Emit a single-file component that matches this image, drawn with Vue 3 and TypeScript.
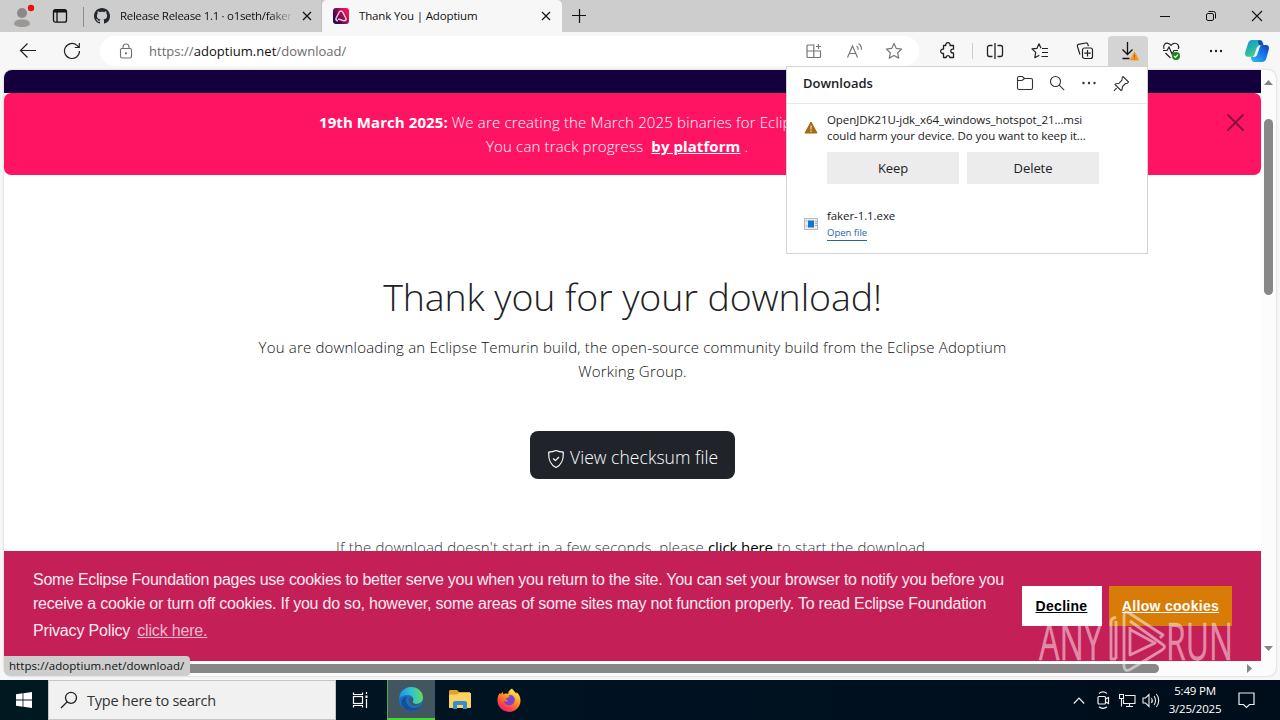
<script setup lang="ts">
interface Download {
  name: string
  detail?: string
  link?: string
}

const flagged: Download = {
  name: 'OpenJDK21U-jdk_x64_windows_hotspot_21...msi',
  detail: 'could harm your device. Do you want to keep it...',
}
const finished: Download = { name: 'faker-1.1.exe', link: 'Open file' }
</script>

<template>
  <div class="screen">
    <header class="tabstrip">
      <div class="profile">
        <svg width="24" height="24" viewBox="0 0 24 24">
          <circle cx="10" cy="9" r="5" fill="#8d8886" />
          <path d="M2 20.500c0-4 3.500-5 8-5s8 1 8 5c-2 2-5 2.500-8 2.500s-6-.5-8-2.500z" fill="#9b9795" />
          <circle cx="19" cy="4" r="3.200" fill="#e3120b" />
        </svg>
      </div>
      <div class="tabmenu">
        <svg width="16" height="16" viewBox="0 0 16 16" fill="none" stroke="#111" stroke-width="1.300">
          <rect x="1.500" y="1.700" width="13" height="12.500" rx="2" />
          <path d="M2 3.300h12" stroke-width="2.400" />
          <path d="M5 4v10" />
        </svg>
      </div>
      <div class="tab idle">
        <svg width="16" height="16" viewBox="0 0 16 16">
          <path fill="#24292f" d="M8 0C3.580 0 0 3.580 0 8c0 3.540 2.290 6.530 5.470 7.590.4.070.55-.17.55-.38 0-.19-.01-.82-.01-1.490-2.010.37-2.530-.49-2.690-.94-.09-.23-.48-.94-.82-1.130-.28-.15-.68-.52-.01-.53.63-.01 1.080.58 1.230.82.72 1.210 1.870.87 2.330.66.070-.52.280-.87.510-1.070-1.780-.2-3.640-.89-3.640-3.950 0-.87.310-1.590.82-2.150-.08-.2-.36-1.020.08-2.120 0 0 .67-.21 2.200.82.640-.18 1.320-.27 2-.27s1.360.09 2 .27c1.530-1.040 2.200-.82 2.200-.82.440 1.100.160 1.920.080 2.120.510.560.820 1.270.820 2.150 0 3.070-1.870 3.750-3.650 3.950.290.250.540.730.540 1.480 0 1.070-.01 1.930-.01 2.200 0 .210.150.460.550.380A8.010 8.010 0 0 0 16 8c0-4.420-3.580-8-8-8z" />
        </svg>
        <span class="tabtitle fade">Release Release 1.1 · o1seth/faker</span>
        <svg class="close" width="10" height="10" viewBox="0 0 10 10"><path d="M1 1l8 8M9 1L1 9" stroke="#111" stroke-width="1.300" /></svg>
      </div>
      <div class="tab active">
        <svg width="16" height="16" viewBox="0 0 16 16">
          <defs><linearGradient id="ado" x1="0" x2="1" y1="0.800" y2="0.200"><stop offset=".15" stop-color="#2b0a4a" /><stop offset=".85" stop-color="#e8125c" /></linearGradient></defs>
          <rect width="16" height="16" rx="3" fill="url(#ado)" />
          <path d="M5 12.800C3 12.800 2.500 11.500 3.200 10L6.300 4c.8-1.500 2.600-1.500 3.400 0L12.800 10c.8 1.600 0 2.800-1.800 2.800-1.800 0-3.200-2.100-6-1.500" fill="none" stroke="#f6c5db" stroke-width="1.500" />
        </svg>
        <span class="tabtitle">Thank You | Adoptium</span>
        <svg class="close" width="10" height="10" viewBox="0 0 10 10"><path d="M1 1l8 8M9 1L1 9" stroke="#111" stroke-width="1.200" /></svg>
      </div>
      <div class="newtab">
        <svg width="14" height="14" viewBox="0 0 14 14"><path d="M7.500 0v14M0 6.500h14" stroke="#111" stroke-width="1.200" /></svg>
      </div>
      <div class="winbtns">
        <span><svg width="12" height="12" viewBox="0 0 12 12"><path d="M1 6.500h10" stroke="#111" /></svg></span>
        <span><svg width="12" height="12" viewBox="0 0 12 12" fill="none" stroke="#111"><rect x="1.500" y="3.500" width="7" height="7" rx="1.500" /><path d="M3.500 1.500h5a2 2 0 0 1 2 2v5" /></svg></span>
        <span><svg width="12" height="12" viewBox="0 0 12 12"><path d="M1 1l10 10M11 1L1 11" stroke="#111" stroke-width="1.100" /></svg></span>
      </div>
    </header>

    <nav class="toolbar">
      <div class="cell back"><svg width="18" height="16" viewBox="0 0 18 16" fill="none" stroke="#222" stroke-width="1.200"><path d="M17 7.500H1.500M8.500 .5L1.500 7.500 8.500 14.500" /></svg></div>
      <div class="cell reload"><svg width="18" height="18" viewBox="0 0 18 18" fill="none" stroke="#222" stroke-width="1.200"><path d="M16.500 9A7.500 7.500 0 1 1 14 3.400L16 5.300M16.300 1v4.500h-4.500" /></svg></div>
      <div class="omnibox">
        <svg class="lock" width="14" height="16" viewBox="0 0 14 16" fill="none" stroke="#6f6f6f" stroke-width="1.100"><rect x="1.500" y="5.500" width="11" height="9.500" rx="1.500" /><path d="M4 5.500V4a3 3 0 0 1 6 0v1.500" /><circle cx="7" cy="10.300" r=".6" fill="#666" /></svg>
        <span class="url">https://<b>adoptium.net</b>/download/</span>
        <span class="cell40"><svg width="16" height="16" viewBox="0 0 16 16" fill="none" stroke="#767676" stroke-width="1.200"><path d="M1 8h13.500v5.500a1 1 0 0 1-1 1H2a1 1 0 0 1-1-1v-10.500a1 1 0 0 1 1-1h5.800v12M12.500 1v5M10 3.500h5" /></svg></span>
        <span class="cell40 read"><svg width="18" height="16" viewBox="0 0 18 16" fill="none" stroke="#767676" stroke-width="1.200"><path d="M1.500 14.500L6.500 3l5 11.500M3.300 10.500h6.400M10.500 3c1.300.8 1.800 2 1.700 3.700M12.500.8c2.200 1.200 3.100 3.200 3 6" /></svg></span>
        <span class="cell40"><svg width="18" height="18" viewBox="0 0 18 18" fill="none" stroke="#767676" stroke-width="1.200" stroke-linejoin="round"><path d="M9 1.500l2.300 4.900 5.300.7-3.900 3.700 1 5.300L9 13.500l-4.700 2.600 1-5.300L1.400 7.100l5.300-.7z" /></svg></span>
      </div>
      <div class="cell ext"><svg width="18" height="18" viewBox="0 0 18 18" fill="none" stroke="#222" stroke-width="1.300" stroke-linejoin="round"><path d="M4.500 3.500h2.300a2.200 2.200 0 1 1 4.200 0h3.500v3.700h-.8a1.900 1.900 0 0 0 0 3.800h.8v4.500h-3.700v-.6a1.900 1.900 0 0 0-3.600 0v.6H4.500V11.400a2.200 2.200 0 1 1 0-4.200z" /></svg></div>
      <i class="rule"></i>
      <div class="cell split"><svg width="18" height="16" viewBox="0 0 18 16" fill="none" stroke="#222" stroke-width="1.300"><path d="M6.500 2.500h-3a2 2 0 0 0-2 2v7a2 2 0 0 0 2 2h3M11.500 2.500h3a2 2 0 0 1 2 2v7a2 2 0 0 1-2 2h-3M9 0v16" /></svg></div>
      <div class="cell fav"><svg width="18" height="18" viewBox="0 0 18 18" fill="none" stroke="#222" stroke-width="1.200" stroke-linejoin="round"><path d="M10 6.300L8 1.800 6 6.300 1 6.900l3.700 3.500-.9 5.300 4.500-2.500M11 6.500h6M11 10.500h6M10.500 14.500h6.500" /></svg></div>
      <div class="cell coll"><svg width="18" height="18" viewBox="0 0 18 18" fill="none" stroke="#222" stroke-width="1.200"><rect x="6.500" y="6" width="10" height="10.500" rx="2" /><path d="M11.500 8v6.500M8.300 11.200h6.500M4 12.500L1.400 4.400c-.3-1 .1-1.700 1-2L9.800 1c1-.2 1.700.3 2 1.200l.6 2" /></svg></div>
      <div class="cell dl">
        <svg width="24" height="22" viewBox="0 0 24 22" fill="none"><path d="M11.500 2v12M6.500 9.500l5 5 5-5M6.500 18.500h7" stroke="#111" stroke-width="1.300" /><path d="M18.500 12l4 8h-8z" fill="#f7981d" stroke="#f7981d" /><path d="M18.500 14.500v3M18.500 18.500v1" stroke="#b35d00" /></svg>
      </div>
      <div class="cell health">
        <svg width="20" height="20" viewBox="0 0 20 20" fill="none" stroke="#222" stroke-width="1.200"><path d="M2 8C.5 4 3.500 1.700 6 2.300c1.600.3 3 2 3 2s1.400-1.700 3.200-2c3-.4 5.500 2.200 4 5.700M1 9.500h4l2-3.500 3 7 2-3.500h4M3.500 12l5 5" /><circle cx="14" cy="15" r="4" fill="#16871c" stroke="none" /><path d="M12 15l1.500 1.500 2.500-2.800" stroke="#fff" /></svg>
      </div>
      <div class="cell more"><svg width="16" height="4" viewBox="0 0 16 4" fill="#222"><circle cx="3" cy="2" r="1.200" /><circle cx="8" cy="2" r="1.200" /><circle cx="13" cy="2" r="1.200" /></svg></div>
      <div class="cell copilot">
        <svg width="26" height="24" viewBox="0 0 26 24">
          <defs>
            <linearGradient id="c1" x1="0" y1="0" x2=".6" y2="1"><stop stop-color="#1597d5" /><stop offset=".5" stop-color="#23b3ad" /><stop offset="1" stop-color="#54d179" /></linearGradient>
            <linearGradient id="c2" x1="1" y1="0" x2="0" y2="1"><stop stop-color="#123fb5" /><stop offset=".5" stop-color="#1a7df0" /><stop offset="1" stop-color="#2ec2f2" /></linearGradient>
          </defs>
          <path d="M8 1h8c2 0 2.500 1.500 3 3l.5 2c-4 0-5 1-6 4l-2 6c-.5 1.300-1.500 1.800-3 1.800H4c-2.500 0-3.500-2-2.800-4.500L4 4.500C4.700 2.300 5.800 1 8 1z" fill="url(#c1)" />
          <path d="M14.500 1.200c3 0 4 .8 4.800 4.800h-4c-1.500-2-1.500-4-.8-4.800z" fill="#1648bb" />
          <path d="M18 23h-7c-2.500 0-3.500-1-4.200-5h2.500c2 0 3.200-1 3.700-3l2-6c.6-2 1.500-3 3.500-3H22c2.500 0 3.500 2 2.800 4.500L22.300 19.500c-.7 2.300-2 3.500-4.300 3.500z" fill="url(#c2)" />
          <path d="M16 7c-2 0-2.600 1-3.200 3l-1.700 5c-.4 1.300-.9 2-1.800 2.500 2 .2 3-.7 3.600-2.500l2-5.500c.3-1.200.5-1.800 1.100-2.500z" fill="#fff" stroke="#fff" stroke-width=".8" />
        </svg>
      </div>
    </nav>

    <section class="browser">
      <div class="frame">
        <main class="page">
          <div class="navbar"></div>
          <div class="banner">
            <p class="b1"><b>19th March 2025:</b> <span>We are creating the March 2025 binaries for Eclipse</span></p>
            <p class="b2"><span>You can track progress</span><b class="plat">by platform</b><span>.</span></p>
            <svg class="dismiss" width="17" height="17" viewBox="0 0 17 17"><path d="M1 1l15 15M16 1L1 16" stroke="#86103f" stroke-width="1.900" stroke-linecap="round" /></svg>
          </div>
          <h1>Thank you for your download!</h1>
          <p class="lead l1">You are downloading an Eclipse Temurin build, the open-source community build from the Eclipse Adoptium</p>
          <p class="lead l2">Working Group.</p>
          <button class="checksum">
            <svg width="18" height="20" viewBox="0 0 18 20" fill="none" stroke="#fff" stroke-width="1.200" stroke-linejoin="round"><path d="M9 1.500c2.500 1 5 1.500 7.300 1.700.3 8-1.500 12.300-7.300 15.300C3.200 15.500 1.400 11.200 1.700 3.200 4 3 6.500 2.500 9 1.500z" /><path d="M6.200 9.500l2.200 2.200L12 8" /></svg>
            <span>View checksum file</span>
          </button>
          <p class="retry">If the download doesn't start in a few seconds, please <b>click here</b> to start the download.</p>
          <aside class="cookies">
            <div class="message">
              <p class="m1">Some Eclipse Foundation pages use cookies to better serve you when you return to the site. You can set your browser to notify you before you</p>
              <p class="m2">receive a cookie or turn off cookies. If you do so, however, some areas of some sites may not function properly. To read Eclipse Foundation</p>
              <p class="m3"><span>Privacy Policy</span><u>click here.</u></p>
            </div>
            <div class="choices">
              <a class="decline">Decline</a>
              <a class="allow">Allow cookies</a>
            </div>
          </aside>
        </main>
        <div class="vbar">
          <svg width="9" height="5" viewBox="0 0 9 5"><path d="M0 5L4.500 0 9 5z" fill="#858585" /></svg>
          <i class="vthumb"></i>
          <svg class="down" width="9" height="5" viewBox="0 0 9 5"><path d="M0 0h9L4.500 5z" fill="#858585" /></svg>
        </div>
        <div class="hbar">
          <i class="hthumb"></i>
          <svg width="5" height="9" viewBox="0 0 5 9"><path d="M0 0l5 4.500L0 9z" fill="#858585" /></svg>
        </div>
      </div>
    </section>

    <footer class="taskbar">
      <div class="start"><svg width="16" height="16" viewBox="0 0 16 16" fill="#fff"><path d="M0 2.200L6.600 1.300v6.200H0zM7.400 1.200L16 0v7.500H7.400zM0 8.400h6.600v6.300L0 13.800zM7.400 8.400H16V16l-8.600-1.200z" /></svg></div>
      <div class="search">
        <svg width="18" height="18" viewBox="0 0 18 18" fill="none" stroke="#222" stroke-width="1.300"><circle cx="11" cy="6.800" r="5.500" /><path d="M7 11l-6 6" /></svg>
        <span>Type here to search</span>
      </div>
      <div class="task"><svg width="17" height="16" viewBox="0 0 17 16" fill="none" stroke="#fff" stroke-width="1.200"><rect x="1.500" y="4.500" width="9" height="7" /><path d="M1.500.5v2h9v-2M1.500 15.500v-2h9v2M14.500 0v2M14.500 7v9" /><path d="M14.500 3.500v2.500" stroke-width="2" /></svg></div>
      <div class="task current">
        <svg width="26" height="26" viewBox="0 0 26 26">
          <defs><linearGradient id="e1" x1="0" x2="1" y1=".5" y2=".4"><stop stop-color="#2290de" /><stop offset=".5" stop-color="#2cc3d6" /><stop offset="1" stop-color="#66dc55" /></linearGradient></defs>
          <circle cx="13" cy="13" r="12" fill="#1671c5" />
          <path d="M1.200 12C2 5 7.500 1 13 1c7 0 12 5 12 10.500 0 4-3 6.500-6.500 6.500-3 0-4.500-1.200-3.700-2.500 2.200-3-.8-6.500-4.800-6.500-4 0-7.500 1.500-8.800 3z" fill="url(#e1)" />
          <path d="M9.500 10.500c-4 4 0 11.500 7 11.500 3 0 5-1 6.700-3-2 6-13 8.500-18.200 2-3.500-4.500-1.500-10.300 4.500-10.500z" fill="#164f98" />
          <path d="M11 12c2-1.500 5 .5 3.900 3.300-1 1.500.8 2.700 3.600 2.700 2 0 3.500-.6 4.800-1.700-1.500 3.400-4.500 4-7 3.700-4-.6-6.500-4.500-5.300-8z" fill="#435763" />
        </svg>
      </div>
      <div class="task">
        <svg width="22" height="20" viewBox="0 0 22 20"><path d="M0 1.500C0 .7.500 0 1.500 0H8l2 2h11v4H0z" fill="#e0a425" /><path d="M0 4.500h8l2-1.500h12v14c0 .6-.4 1-1 1H1c-.6 0-1-.4-1-1z" fill="#fcd362" /><path d="M4 19v-6c0-1 .8-2 2-2h10c1.200 0 2 1 2 2v6h-4v-4H8v4z" fill="#378bd0" /></svg>
      </div>
      <div class="task">
        <svg width="24" height="24" viewBox="0 0 24 24">
          <defs><linearGradient id="f1" x1=".8" x2=".2" y1="0" y2="1"><stop offset=".05" stop-color="#fff04d" /><stop offset=".45" stop-color="#ff8d1e" /><stop offset=".8" stop-color="#ff3750" /><stop offset="1" stop-color="#e31587" /></linearGradient></defs>
          <path d="M15 .5c1.500 2.300 3.200 3.500 4.300 5.200.3-.5.300-1.200.2-1.700C22 6 23.500 9 23.500 12.300A11.500 11.500 0 0 1 .5 12.500C.4 9 1.500 6.500 3 4.700l.5 1.600L6 3.800l.2 2.400c1.500-.9 3.500-.7 5-.2C11.300 3.500 12.800 1.500 15 .5z" fill="url(#f1)" />
          <path d="M12 7c4-.5 6.300 2.500 5.800 5.500-.5 3-3 5-6 4.800-3-.2-5-2.300-5-4.500 1.500 1.500 3 1 4.500 0l-2-1c-1-1 .5-2.300 3-2.500z" fill="#7a43d4" />
        </svg>
      </div>
      <div class="tray">
        <svg class="chev" width="12" height="7" viewBox="0 0 12 7" fill="none" stroke="#eee" stroke-width="1.200"><path d="M.8 6.500L6 1l5.200 5.500" /></svg>
        <svg class="cam" width="13" height="18" viewBox="0 0 13 18" fill="none" stroke="#eee" stroke-width="1.200"><rect x="1" y="5.500" width="7.500" height="7.500" rx="1" /><path d="M8.500 8l3-1.500v6l-3-1.500M2 2.500c2.500-2 5.500-2 8 0M2 15.800c2.500 2 5.500 2 8 0" /></svg>
        <svg class="net" width="17" height="15" viewBox="0 0 17 15" fill="none" stroke="#eee" stroke-width="1.100"><path d="M6 2.500h10v8H4.500V6.500M7 13.500h7M10.500 10.500v3M.5 1.500h4v4h-4zM2.500 5.500v8" /></svg>
        <svg class="vol" width="18" height="15" viewBox="0 0 18 15" fill="none" stroke="#eee" stroke-width="1.100"><path d="M1 5h2.500L7 1.500v12L3.500 10H1zM9.500 5c1 1.500 1 3.500 0 5M12 3c2 2.500 2 6.500 0 9M14.300 1c3.200 3.500 3.200 9.500 0 13" /></svg>
        <div class="clock"><span>5:49 PM</span><span>3/25/2025</span></div>
        <svg class="note" width="17" height="17" viewBox="0 0 17 17" fill="none" stroke="#eee" stroke-width="1.200"><path d="M1 1h15v11.500h-4.500L8.500 15.500l-3-3H1z" /></svg>
      </div>
    </footer>

    <div class="flyout">
      <div class="fhead">
        <h2>Downloads</h2>
        <svg class="folder" width="18" height="16" viewBox="0 0 18 16" fill="none" stroke="#333" stroke-width="1.100"><path d="M1.500 3a1.500 1.500 0 0 1 1.500-1.500h3.500L8.500 3.500H15A1.500 1.500 0 0 1 16.500 5v8a1.500 1.500 0 0 1-1.500 1.500H3A1.500 1.500 0 0 1 1.500 13zM1.500 5.500H6l2.500-2" /></svg>
        <svg class="find" width="16" height="16" viewBox="0 0 16 16" fill="none" stroke="#333" stroke-width="1.100"><circle cx="6.500" cy="6.500" r="5" /><path d="M10.200 10.200l5 5" /></svg>
        <svg class="dots" width="16" height="4" viewBox="0 0 16 4" fill="#333"><circle cx="2.500" cy="2" r="1.200" /><circle cx="8" cy="2" r="1.200" /><circle cx="13.500" cy="2" r="1.200" /></svg>
        <svg class="pin" width="17" height="17" viewBox="0 0 17 17" fill="none" stroke="#333" stroke-width="1.100" stroke-linejoin="round"><path d="M10 1.500l5.500 5.500-1 1.200-2 .3-3 3-.5 3.200-1 .8-6-6 1-.8 3.200-.5 2.800-3 .2-2.700zM4.800 11.700L1 15.800" /></svg>
      </div>
      <div class="fitem">
        <svg class="warn" width="14" height="13" viewBox="0 0 14 13"><path d="M7 1L13 12H1z" fill="#a66a12" stroke="#a66a12" stroke-linejoin="round" /><path d="M7 4.500v4M7 9.500v1.500" stroke="#f8ecd0" stroke-width="1.100" /></svg>
        <div class="ftext">
          <span class="n1">{{ flagged.name }}</span>
          <span class="n2">{{ flagged.detail }}</span>
          <div class="fbtns"><span>Keep</span><span>Delete</span></div>
        </div>
      </div>
      <div class="fitem second">
        <svg class="exe" width="14" height="12" viewBox="0 0 14 12"><rect x=".5" y=".5" width="13" height="11" fill="#eeebe8" stroke="#b9b9b9" /><rect x="4" y="2.500" width="6" height="7" fill="#1673cf" /><path d="M11 3.500h2M11 5.500h2M11 7.500h2M1.500 3h2M1.500 8h2" stroke="#8db2d4" /></svg>
        <div class="ftext">
          <span class="n3">{{ finished.name }}</span>
          <a>{{ finished.link }}</a>
        </div>
      </div>
    </div>

    <div class="status">https://adoptium.net/download/</div>

    <svg class="mark" width="200" height="70" viewBox="0 0 200 70">
      <g fill="#fff" fill-opacity=".48" stroke="#fff" stroke-opacity=".2" stroke-width=".8" font-family="Open Sans, sans-serif" font-size="51">
        <text x="5" y="55.500" textLength="63" lengthAdjust="spacingAndGlyphs">ANY</text>
        <text x="132" y="55.500" textLength="67" lengthAdjust="spacingAndGlyphs">RUN</text>
      </g>
      <g fill="none" stroke="#fff" stroke-opacity=".5" stroke-width="2.800" stroke-linejoin="round">
        <path d="M82 55h-5V18q0-4 5-4.500M82 17v38" />
        <path d="M126 34l3-3-34-22q-5-3-5 3v49q0 8 7 4l31-19q5-3 0-6L96 17M96 23v28l25-12L97 26" />
      </g>
    </svg>
  </div>
</template>

<style>
body {
  margin: 0;
  overflow: hidden;
}
</style>

<style scoped>
* {
  box-sizing: border-box;
}
p,
h1,
h2 {
  margin: 0;
  font-weight: inherit;
}
svg {
  display: block;
  flex: none;
}
.screen {
  position: relative;
  width: 1280px;
  height: 720px;
  overflow: hidden;
  display: flex;
  flex-direction: column;
  background: #f7f7f7;
  font-family: "Open Sans", "Noto Sans", sans-serif;
  color: #202124;
  white-space: nowrap;
}
.tabstrip {
  height: 32px;
  display: flex;
  background: #cdcdcd;
}
.profile {
  width: 46px;
  padding: 4px 0 0 12px;
}
.tabmenu {
  width: 38px;
  height: 20px;
  margin-top: 7px;
  padding: 1px 0 0 6px;
  border-right: 1px solid #8b8b8b;
}
.tab {
  width: 238px;
  display: flex;
  align-items: center;
  font-size: 11.500px;
  color: #111;
}
.idle {
  padding: 0 14px 0 10px;
  border-right: 1px solid #c0c0c0;
}
.active {
  width: 240px;
  background: #f7f7f7;
  border-radius: 5px 5px 0 0;
  padding: 0 11px;
}
.tabtitle {
  margin: -2px 0 0 10px;
  flex: 1;
  overflow: hidden;
  letter-spacing: -0.15px;
}
.fade {
  flex: none;
  width: 174px;
  letter-spacing: -0.3px;
  mask-image: linear-gradient(90deg, #000 150px, transparent 174px);
}
.idle .close {
  margin-left: 8px;
}
.newtab {
  padding: 9px 0 0 10px;
}
.winbtns {
  margin-left: auto;
  display: flex;
}
.winbtns span {
  width: 46px;
  height: 32px;
  display: grid;
  place-items: center;
}
.toolbar {
  height: 38px;
  display: flex;
  align-items: center;
}
.cell {
  width: 44px;
  height: 30px;
  display: grid;
  place-items: center;
  flex: none;
}
.back {
  margin-left: 6px;
}
.reload {
  margin-right: 6px;
}
.omnibox {
  width: 819px;
  height: 30px;
  border-radius: 15px;
  background: #fff;
  display: flex;
  align-items: center;
  padding: 0 5px 0 19px;
}
.url {
  margin-left: 16px;
  flex: 1;
  font-size: 13px;
  letter-spacing: 0.04px;
  color: #6b6b6b;
}
.url b {
  font-weight: 400;
  color: #111;
}
.cell40 {
  width: 40px;
  display: grid;
  place-items: center;
}
.read {
  padding-left: 2px;
}
.ext {
  margin-left: 8px;
  width: 42px;
}
.rule {
  width: 1px;
  height: 16px;
  background: #ccc;
  margin-left: 3px;
}
.coll {
  width: 45px;
}
.fav {
  margin-left: 1px;
}
.dl {
  width: 40px;
  background: #d4d4d4;
  border-radius: 4px 4px 0 0;
  margin-left: 1px;
}
.health {
  margin-left: 2px;
}
.more {
  width: 43px;
}
.copilot {
  width: 40px;
}
.browser {
  height: 610px;
  padding: 0 4px 4px;
}
.frame {
  width: 1272px;
  height: 606px;
  display: grid;
  grid-template-columns: 1257px 15px;
  grid-template-rows: 591px 15px;
  background: #fcfcfc;
  border-radius: 8px;
  overflow: hidden;
  box-shadow: 0 0 2px #b5b5b5;
}
.page {
  background: #fff;
  overflow: hidden;
  display: flex;
  flex-direction: column;
  align-items: center;
  position: relative;
}
.navbar {
  width: 100%;
  height: 23px;
  background: #14003c;
  flex: none;
}
.banner {
  width: 100%;
  height: 82px;
  flex: none;
  background: #ff1464;
  border-radius: 7px;
  position: relative;
  color: #fff;
  font-size: 15px;
  font-weight: 300;
  line-height: 24px;
  letter-spacing: 0.16px;
  padding: 17px 0 0 315px;
}
.banner b {
  font-weight: 700;
  letter-spacing: 0.08px;
}
.b2 {
  padding-left: 167px;
}
.plat {
  text-decoration: underline;
  margin: 0 4px 0 8px;
}
.dismiss {
  position: absolute;
  right: 17px;
  top: 21px;
}
h1 {
  margin-top: 93px;
  height: 58px;
  line-height: 58px;
  font-size: 37.500px;
  font-weight: 300;
  letter-spacing: -0.09px;
}
.lead {
  font-size: 15px;
  font-weight: 300;
  line-height: 24px;
  height: 24px;
  letter-spacing: 0.19px;
  color: #111;
}
.l1 {
  margin-top: 9px;
}
.checksum {
  margin-top: 48px;
  width: 205px;
  height: 48px;
  flex: none;
  border: 0;
  border-radius: 8px;
  background: #20242a;
  color: #fff;
  display: flex;
  align-items: center;
  padding: 5px 0 0 17px;
  font: 300 17.500px "Open Sans", sans-serif;
  letter-spacing: 0.05px;
}
.checksum span {
  margin: -2px 0 0 5px;
}
.checksum svg {
  margin-top: 3px;
}
.retry {
  margin-top: 56px;
  font-size: 15px;
  font-weight: 300;
  line-height: 24px;
  letter-spacing: 0.16px;
  color: #33373b;
}
.retry b {
  font-weight: 400;
  color: #000;
  letter-spacing: -0.1px;
}
.cookies {
  position: absolute;
  left: 0;
  bottom: 0;
  width: 1257px;
  height: 110px;
  background: #c51f57;
  color: #fbeaf1;
  font: 16px/24px "Liberation Sans", Arial, sans-serif;
  letter-spacing: -0.27px;
  display: flex;
  padding: 17px 29px 0;
}
.message {
  width: 989px;
}
.m2 {
  letter-spacing: -0.22px;
}
.m3 {
  line-height: 30px;
  letter-spacing: -0.17px;
}
.m3 u {
  margin-left: 7px;
  color: #f0b9cd;
}
.choices {
  display: flex;
  gap: 7px;
  padding-top: 18px;
  font-size: 14px;
  font-weight: 700;
  letter-spacing: 0.3px;
}
.choices a {
  height: 40px;
  line-height: 40px;
  text-align: center;
  text-decoration: underline;
}
.decline {
  width: 80px;
  background: #fff;
  color: #000;
  padding-right: 1px;
}
.allow {
  width: 123px;
  background: #d97b07;
  color: #fff;
}
.vbar {
  display: flex;
  flex-direction: column;
  align-items: center;
  padding: 10px 0 10px;
}
.vthumb {
  width: 9px;
  height: 176px;
  margin-top: 34px;
  border-radius: 5px;
  background: #878787;
}
.down {
  margin-top: auto;
}
.hbar {
  display: flex;
  align-items: center;
  padding-left: 14px;
}
.hthumb {
  width: 1141px;
  height: 9px;
  border-radius: 5px;
  background: #878787;
  margin-right: 88px;
}
.taskbar {
  height: 40px;
  display: flex;
  background: linear-gradient(90deg, #001820, #001222 50%, #000d1a);
  color: #fff;
}
.start {
  width: 48px;
  display: grid;
  place-items: center;
}
.search {
  width: 288px;
  background: #f1f1f1;
  border: 1px solid #c5c5c5;
  color: #333;
  display: flex;
  align-items: center;
  padding-left: 11px;
  font-size: 14.500px;
  letter-spacing: -0.24px;
}
.search span {
  margin-left: 9px;
}
.task {
  width: 49px;
  display: grid;
  place-items: center;
}
.search + .task {
  width: 51px;
  padding-right: 3px;
}
.current {
  width: 48px;
  background: #42565f;
  border-bottom: 2px solid #45d82e;
  border-left: 1px solid #4eaa54;
  padding-right: 1px;
}
.tray {
  margin-left: auto;
  width: 207px;
  display: flex;
  align-items: center;
}
.cam {
  margin-left: 12px;
}
.net {
  margin-left: 9px;
}
.vol {
  margin-left: 6px;
}
.clock {
  width: 62px;
  margin-left: 4px;
  display: flex;
  flex-direction: column;
  align-items: center;
  font-size: 11.500px;
  line-height: 18px;
  letter-spacing: -0.2px;
}
.note {
  margin-left: 12px;
}
.flyout {
  position: absolute;
  left: 786px;
  top: 66px;
  width: 362px;
  height: 188px;
  background: #fff;
  border: 1px solid #d4d4d4;
}
.fhead {
  height: 37px;
  border-bottom: 1px solid #e8e8e8;
  display: flex;
  align-items: center;
  padding: 0 17px 4px 16px;
}
h2 {
  font-size: 13px;
  font-weight: 600;
  width: 213px;
}
.find {
  margin-left: 15px;
}
.dots {
  margin-left: 16px;
}
.pin {
  margin-left: 16px;
}
.fitem {
  display: flex;
  padding: 8px 0 0 17px;
  font-size: 11.500px;
  letter-spacing: -0.08px;
}
.n2 {
  letter-spacing: -0.05px;
}
.warn {
  margin: 9px 9px 0 0;
}
.exe {
  margin: 10px 9px 0 0;
}
.ftext {
  display: flex;
  flex-direction: column;
  align-items: flex-start;
  line-height: 16px;
}
.fbtns {
  display: flex;
  gap: 8px;
  margin-top: 8px;
}
.fbtns span {
  width: 132px;
  height: 32px;
  line-height: 32px;
  text-align: center;
  background: #ececec;
  font-size: 13px;
}
.second {
  padding-top: 24px;
}
.second a {
  font-size: 9.500px;
  line-height: 17px;
  height: 17px;
  letter-spacing: 0;
  color: #1b66ad;
  border-bottom: 1px solid #1b66ad;
}
.status {
  position: absolute;
  left: 4px;
  top: 656px;
  width: 186px;
  height: 20px;
  background: #cdcdcd;
  border-radius: 0 4px 4px 6px;
  padding-left: 5px;
  font-size: 11.500px;
  line-height: 20px;
  letter-spacing: 0.06px;
  color: #111;
}
.mark {
  position: absolute;
  left: 1034px;
  top: 604px;
}
</style>
